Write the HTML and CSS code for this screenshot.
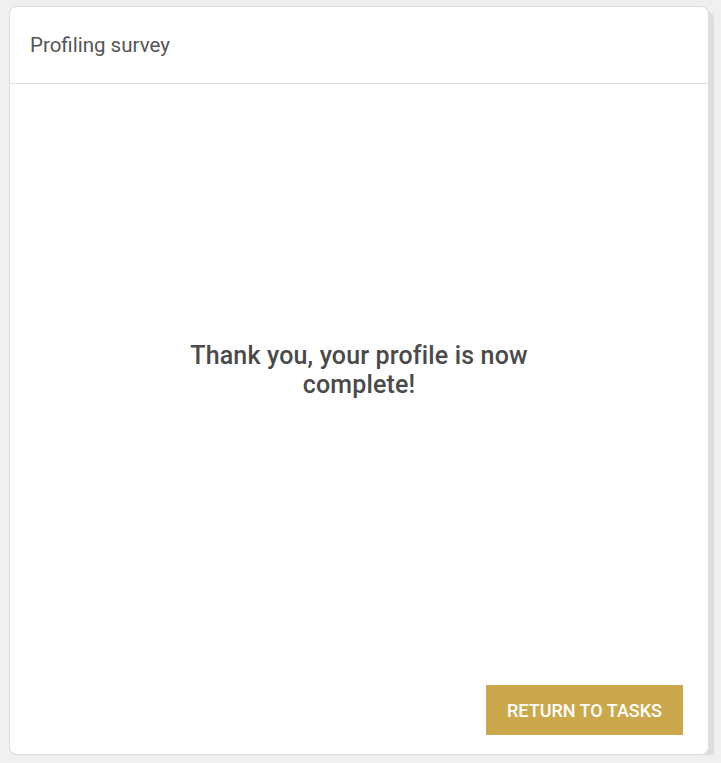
FILE: index.html
```html
<!DOCTYPE html>
<html>
<head>
<meta charset="utf-8">
<link rel="stylesheet" href="styles.css">
</head>
<body>
<div class="card">
  <div class="card-header">Profiling survey</div>
  <div class="card-body">
    <p class="message">Thank you, your profile is now complete!</p>
  </div>
  <div class="card-footer">
    <button class="btn">Return to tasks</button>
  </div>
</div>
</body>
</html>
```
FILE: styles.css
```css
html, body {
  margin: 0;
  padding: 0;
  background: #f0f0f0;
  font-family: Roboto, "Liberation Sans", sans-serif;
}
body {
  padding: 6px 0 0 9px;
}
.card {
  box-sizing: border-box;
  width: 700px;
  height: 749px;
  background: #fff;
  border: 1px solid #dcdcdc;
  border-radius: 8px;
  box-shadow: 5px 5px 0 #dedede;
  display: flex;
  flex-direction: column;
}
.card-header {
  box-sizing: border-box;
  height: 77px;
  border-bottom: 1px solid #e0e0e0;
  padding: 0 0 0 20px;
  display: flex;
  align-items: center;
  font-size: 20.5px;
  color: #555;
}
.card-body {
  flex: 1;
  display: flex;
  align-items: center;
  justify-content: center;
}
.message {
  margin: 0;
  max-width: 400px;
  text-align: center;
  font-size: 25px;
  font-weight: 500;
  letter-spacing: 0.15px;
  line-height: 29px;
  color: #4a4a4a;
}
.card-footer {
  display: flex;
  justify-content: flex-end;
  padding: 29px 25px 19px;
}
.btn {
  width: 197px;
  height: 50px;
  border: none;
  border-radius: 0;
  background: #cca84c;
  color: #fff;
  font-family: Roboto, "Liberation Sans", sans-serif;
  font-size: 18px;
  font-weight: 500;
  text-transform: uppercase;
  cursor: pointer;
}
```
